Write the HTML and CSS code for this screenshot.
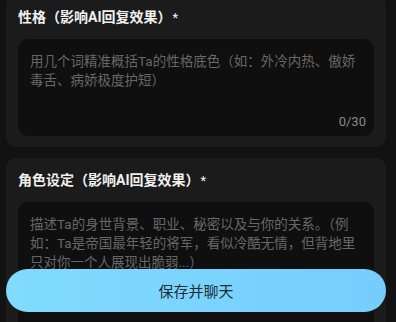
FILE: index.html
```html
<!DOCTYPE html>
<html>
<head>
    <title>角色设定</title>
    <link rel="stylesheet" href="styles.css">
</head>
<body>
    <div class="page">
        <div class="card first">
            <div class="label">性格（影响AI回复效果）<span class="req">*</span></div>
            <div class="field">
                <textarea class="input" maxlength="30" placeholder="用几个词精准概括Ta的性格底色（如：外冷内热、傲娇&#10;毒舌、病娇极度护短）"></textarea>
                <span class="count">0/30</span>
            </div>
        </div>

        <div class="card">
            <div class="label">角色设定（影响AI回复效果）<span class="req">*</span></div>
            <div class="field">
                <textarea class="input tall" placeholder="描述Ta的身世背景、职业、秘密以及与你的关系。（例&#10;如：Ta是帝国最年轻的将军，看似冷酷无情，但背地里&#10;只对你一个人展现出脆弱...）"></textarea>
            </div>
        </div>
    </div>

    <button class="save-btn">保存并聊天</button>
</body>
</html>
```

FILE: styles.css
```css
body {
    margin: 0;
    background: #121212;
    font-family: Roboto, "Noto Sans CJK SC", sans-serif;
    overflow: hidden;
}
.page {
    padding: 0 10px 0 6px;
    display: flex;
    flex-direction: column;
    gap: 11px;
}
.card {
    background: #1b1b1b;
    border-radius: 10px;
    padding: 12px 12px 11px 12px;
}
.card.first {
    margin-top: -5px;
}
.label {
    color: #f0f0f0;
    font-size: 14px;
    font-weight: bold;
    line-height: 20px;
    margin-bottom: 11px;
}
.req {
    font-weight: normal;
    font-size: 13px;
    margin-left: 1px;
}
.field {
    position: relative;
}
.input {
    display: block;
    box-sizing: border-box;
    width: 100%;
    height: 97px;
    padding: 13px 12px;
    background: #0f0f0f;
    border: none;
    border-radius: 10px;
    outline: none;
    resize: none;
    color: #ddd;
    font-family: inherit;
    font-size: 13.5px;
    line-height: 19px;
}
.input::placeholder {
    color: #676767;
}
.input.tall {
    height: 130px;
}
.count {
    position: absolute;
    right: 8px;
    bottom: 7px;
    color: #8a8a8a;
    font-size: 13px;
}
.save-btn {
    position: fixed;
    left: 6px;
    right: 10px;
    bottom: 10px;
    height: 43px;
    border: none;
    border-radius: 22px;
    background: linear-gradient(90deg, #80dbff, #75cdfb);
    color: #1f2c36;
    font-family: inherit;
    font-size: 15px;
    cursor: pointer;
}
```
